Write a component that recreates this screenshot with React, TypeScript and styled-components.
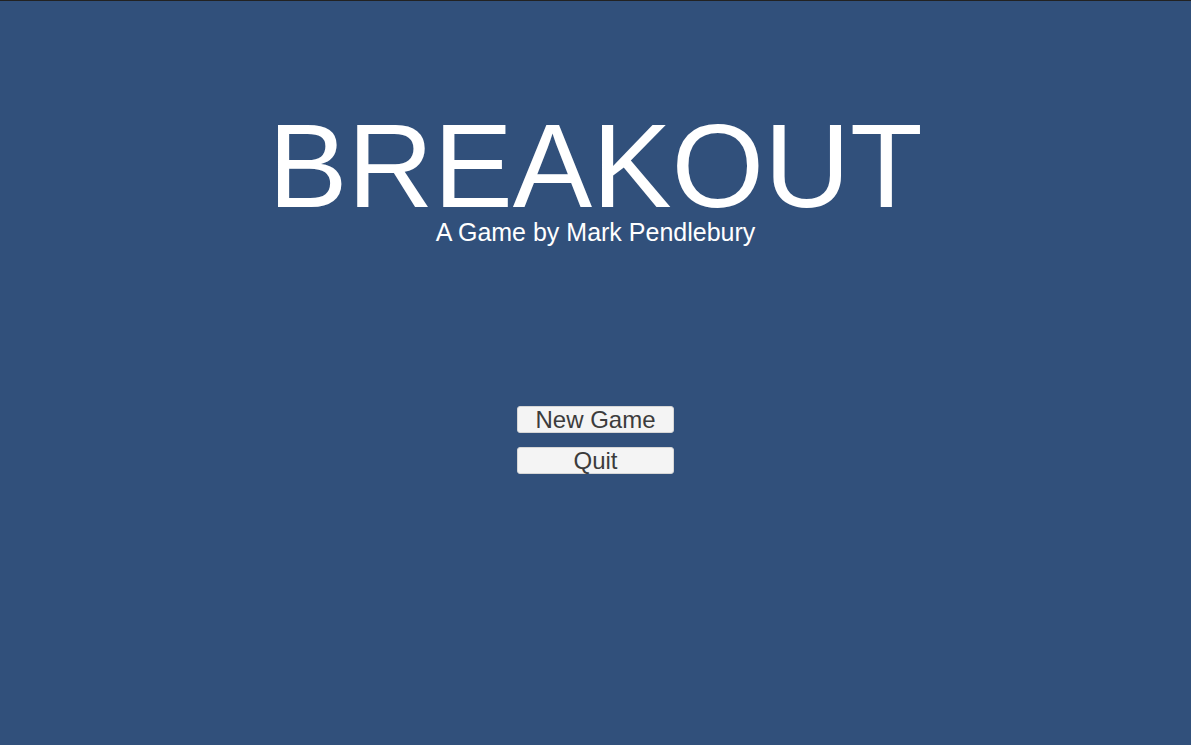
import React from "react";
import styled, { createGlobalStyle } from "styled-components";

const Global = createGlobalStyle`
  html, body { margin: 0; padding: 0; height: 100%; }
  body { background: #31507b; font-family: "Liberation Sans", Arial, sans-serif; }
  #root { height: 100%; }
`;

const Screen = styled.div`
  height: 745px;
  box-sizing: border-box;
  border-top: 1px solid #222222;
  background: #31507b;
  display: flex;
  flex-direction: column;
  align-items: center;
  overflow: hidden;
`;

const Title = styled.h1`
  margin: 115px 0 0;
  font-family: "Liberation Sans", Arial, sans-serif;
  font-weight: 400;
  font-size: 119px;
  line-height: 100px;
  color: #ffffff;
  letter-spacing: 0;
`;

const Subtitle = styled.div`
  margin-top: 2px;
  font-size: 25px;
  line-height: 29px;
  color: #ffffff;
`;

const Menu = styled.div`
  margin-top: 159px;
  display: flex;
  flex-direction: column;
  gap: 14px;
`;

const MenuButton = styled.button`
  width: 157px;
  height: 27px;
  padding: 0;
  border: 1px solid #d6d6d6;
  border-radius: 3px;
  background: #f4f4f4;
  color: #3c3c3c;
  font-family: "Liberation Sans", Arial, sans-serif;
  font-size: 24px;
  line-height: 25px;
  cursor: pointer;
`;

export default function App() {
  return (
    <>
      <Global />
      <Screen>
        <Title>BREAKOUT</Title>
        <Subtitle>A Game by Mark Pendlebury</Subtitle>
        <Menu>
          <MenuButton>New Game</MenuButton>
          <MenuButton>Quit</MenuButton>
        </Menu>
      </Screen>
    </>
  );
}
